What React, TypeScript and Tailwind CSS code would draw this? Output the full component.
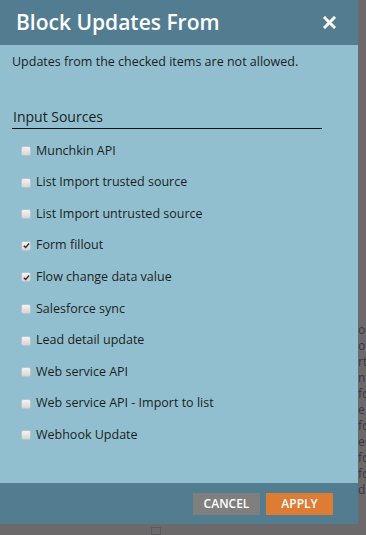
import { useState } from 'react';

const SOURCES = [
  { id: 'munchkin', label: 'Munchkin API', checked: false },
  { id: 'listTrusted', label: 'List Import trusted source', checked: false },
  { id: 'listUntrusted', label: 'List Import untrusted source', checked: false },
  { id: 'form', label: 'Form fillout', checked: true },
  { id: 'flow', label: 'Flow change data value', checked: true },
  { id: 'sfdc', label: 'Salesforce sync', checked: false },
  { id: 'leadDetail', label: 'Lead detail update', checked: false },
  { id: 'ws', label: 'Web service API', checked: false },
  { id: 'wsList', label: 'Web service API - Import to list', checked: false },
  { id: 'webhook', label: 'Webhook Update', checked: false },
];

// bits of the page behind the dimmed overlay
const BEHIND = ['ou', 'ot', 'rt', 'nt', 'fo', 'e l', 'fo', 'er', 'fo', 'fo', 'db'];

function Checkbox({ checked, onChange }: { checked: boolean; onChange: () => void }) {
  return (
    <button
      type="button"
      onClick={onChange}
      className="flex h-[10px] w-[10px] shrink-0 items-center justify-center rounded-[2px] border border-[#b9c4c8] bg-gradient-to-b from-[#f4f4f4] to-[#d6d6d6]"
    >
      {checked && (
        <svg width="7" height="7" viewBox="0 0 8 8" fill="none">
          <path d="M1 4.2 3 6.2 7 1.6" stroke="#333" strokeWidth="1.7" />
        </svg>
      )}
    </button>
  );
}

export default function App() {
  const [checked, setChecked] = useState<Record<string, boolean>>(
    Object.fromEntries(SOURCES.map((s) => [s.id, s.checked])),
  );

  const toggle = (id: string) => setChecked((prev) => ({ ...prev, [id]: !prev[id] }));

  return (
    <div
      className="flex h-[535px] w-[366px] overflow-hidden bg-[#6c696b]"
      style={{ fontFamily: '"Open Sans", "Noto Sans", sans-serif' }}
    >
      <div className="flex w-[358px] shrink-0 flex-col">
        <div className="flex h-[525px] flex-col">
          <div className="flex h-[45px] shrink-0 items-center justify-between bg-[#527d91] pl-4 pr-[22px]">
            <h1 className="text-[21px] font-semibold leading-none text-white">Block Updates From</h1>
            <button className="text-white">
              <svg width="13" height="13" viewBox="0 0 13 13">
                <path d="M2 2 11 11M11 2 2 11" stroke="#fff" strokeWidth="3" strokeLinecap="square" />
              </svg>
            </button>
          </div>

          <div className="flex flex-1 flex-col bg-[#92bfd0] text-[#1b1f22]">
            <p className="pl-3 pt-[8px] text-[12.5px] leading-[18px]">
              Updates from the checked items are not allowed.
            </p>
            <div className="mx-3 mt-[36px] w-[310px] border-b border-[#111] pb-[1px] pl-[1px] text-[14px] leading-[20px]">
              Input Sources
            </div>
            <ul className="mt-[13px] flex flex-col gap-[13.6px] pl-[21px]">
              {SOURCES.map((s) => (
                <li key={s.id} className="flex h-[18px] items-center gap-[5px] text-[12.5px]">
                  <Checkbox checked={checked[s.id]} onChange={() => toggle(s.id)} />
                  <span>{s.label}</span>
                </li>
              ))}
            </ul>
          </div>

          <div className="flex h-[41px] shrink-0 items-center justify-end gap-[6px] bg-[#527d91] pr-[25px]">
            <button className="h-[22px] w-[67px] bg-[#7f7f7f] text-[12px] font-semibold text-white">CANCEL</button>
            <button className="h-[22px] w-[67px] bg-[#dd7c32] text-[12px] font-semibold text-white">APPLY</button>
          </div>
        </div>
        <div className="flex flex-1 pl-[151px] pt-[3px]">
          <div className="h-[8px] w-[10px] border border-[#5c5a5c]" />
        </div>
      </div>

      <div className="flex flex-1 flex-col overflow-hidden pt-[322px] text-[12px] leading-[16px] text-[#353845]">
        {BEHIND.map((t, i) => (
          <span key={i} className="whitespace-nowrap">{t}</span>
        ))}
      </div>
    </div>
  );
}
